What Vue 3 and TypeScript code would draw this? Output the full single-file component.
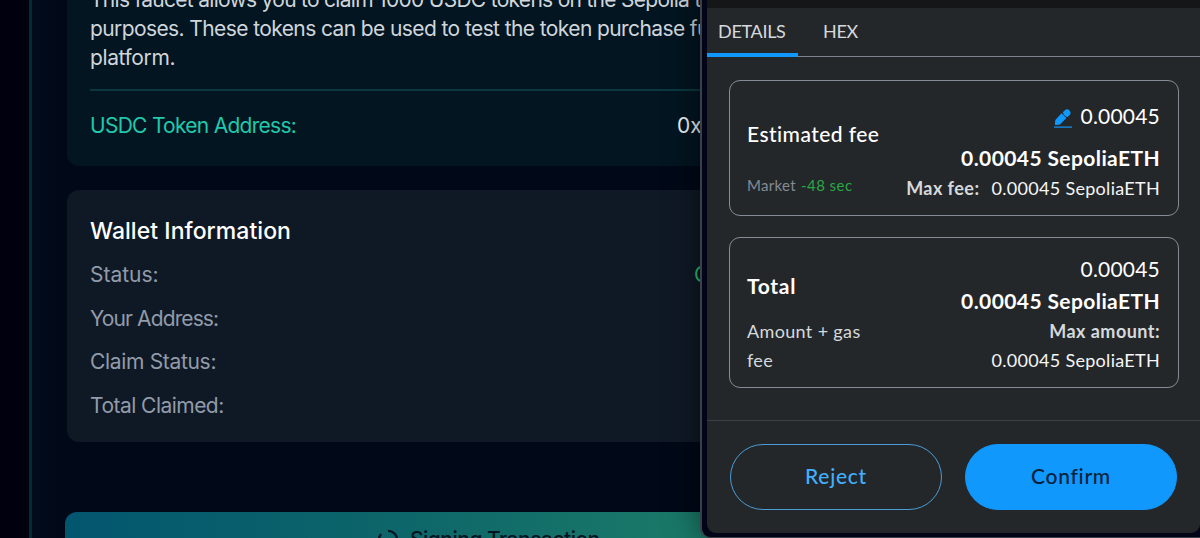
<script setup lang="ts">
interface WalletRow {
  label: string;
  value: string;
  name: string;
}

const description: string[] = [
  'This faucet allows you to claim 1000 USDC tokens on the Sepolia t',
  'purposes. These tokens can be used to test the token purchase fu',
  'platform.',
];

const walletRows: WalletRow[] = [
  { label: 'Status:', value: 'C', name: 'status' },
  { label: 'Your Address:', value: '', name: 'address' },
  { label: 'Claim Status:', value: '', name: 'claim-status' },
  { label: 'Total Claimed:', value: '', name: 'claimed' },
];

const amount = '0.00045';
const amountEth = '0.00045 SepoliaETH';
</script>

<template>
  <div class="page">
    <main class="faucet">
      <section class="card info">
        <p v-for="(line, i) in description" :key="i" class="line" :class="`line-${i}`">{{ line }}</p>
        <div class="token">
          <span class="token-label">USDC Token Address:</span>
          <span class="token-value">0x</span>
        </div>
      </section>

      <section class="card wallet">
        <h2 class="wallet-title">Wallet Information</h2>
        <div v-for="row in walletRows" :key="row.label" class="row">
          <span :class="row.name">{{ row.label }}</span>
          <span class="row-value">{{ row.value }}</span>
        </div>
      </section>

      <button class="claim">
        <svg class="spinner" viewBox="0 0 24 24" width="22" height="22">
          <path d="M12 2a10 10 0 0 1 10 10c0 2.500-1 5-2.800 7M5 19A10 10 0 0 1 4.500 5.400" />
        </svg>
        <span>Signing Transaction</span>
      </button>
    </main>

    <aside class="popup">
      <div class="panel">
        <div class="strip"></div>
        <nav class="tabs">
          <div class="tab active">DETAILS</div>
          <div class="tab">HEX</div>
        </nav>

        <div class="body">
          <section class="box fee">
            <div class="col">
              <span class="fee-title">Estimated fee</span>
              <span class="market">Market <em>-48 sec</em></span>
            </div>
            <div class="col right">
              <span class="amount">
                <svg class="pencil" viewBox="0 0 18 19" width="18" height="19">
                  <path d="M7.600 4.200 12.400 9 6.500 14.900Q5.800 15.600 4.800 15.700L1.600 15.900Q.9 15.900.9 15.200L1.200 12.100Q1.300 11.100 2 10.300Z" />
                  <path d="M8.800 3.200 10.700 1.400Q13.200-.7 15.500 1.400 17.700 3.800 15.500 6.200L13.600 8.100Q10 7 8.800 3.200Z" />
                  <path d="M0 17.500H18V18.700H0Z" />
                </svg>
                <span>{{ amount }}</span>
              </span>
              <b class="amount-eth">{{ amountEth }}</b>
              <span class="max"><b>Max fee:</b><span class="max-eth">{{ amountEth }}</span></span>
            </div>
          </section>

          <section class="box total">
            <div class="col">
              <b class="total-title">Total</b>
              <span class="gas">Amount + gas<br />fee</span>
            </div>
            <div class="col right">
              <span class="amount"><span>{{ amount }}</span></span>
              <b class="amount-eth">{{ amountEth }}</b>
              <span class="max"><b>Max amount:</b></span>
              <span class="max"><span class="max-eth">{{ amountEth }}</span></span>
            </div>
          </section>
        </div>

        <footer class="actions">
          <button class="btn reject">Reject</button>
          <button class="btn confirm">Confirm</button>
        </footer>
      </div>
    </aside>
  </div>
</template>

<style>
body {
  margin: 0;
  overflow: hidden;
  background: #01000f;
}
</style>

<style scoped>
.page {
  position: relative;
  box-sizing: border-box;
  width: 1200px;
  height: 538px;
  padding-left: 29px;
  overflow: hidden;
  background: #01000f;
  font-family: Inter, 'Liberation Sans', sans-serif;
}

.faucet {
  box-sizing: border-box;
  height: 538px;
  padding: 0 291px 0 35px;
  border-left: 3px solid #012d35;
  background: linear-gradient(90deg, #010b1b, #010817 40px);
  overflow: hidden;
}

.card {
  box-sizing: border-box;
  padding: 0 23px;
  border-radius: 12px;
  font-size: 21px;
  line-height: 29px;
  white-space: nowrap;
}

.info {
  height: 166px;
  border-radius: 0 0 12px 12px;
  background: #031521;
  color: #cfd5db;
  overflow: hidden;
}

.line {
  margin: 0;
  letter-spacing: -0.6px;
}

.line-0 {
  margin-top: -15px;
  letter-spacing: -0.71px;
}

.line-2 {
  letter-spacing: -0.38px;
}

.token {
  display: flex;
  justify-content: space-between;
  margin-top: 17px;
  padding-top: 20px;
  border-top: 2px solid #0b383f;
}

.token-label {
  color: #20c9ac;
  letter-spacing: -0.72px;
}

.token-value {
  width: 209px;
  color: #f1f4f6;
}

.wallet {
  height: 252px;
  margin-top: 24px;
  padding-top: 27px;
  background: #0f1926;
  color: #929ba9;
}

.wallet-title {
  margin: 0 0 14px;
  color: #fff;
  font-size: 23px;
  font-weight: 500;
  line-height: 29px;
  letter-spacing: 0.05px;
}

.row {
  display: flex;
  justify-content: space-between;
  height: 43.6px;
}

.address {
  letter-spacing: -0.88px;
}

.claim-status {
  letter-spacing: -0.32px;
}

.claimed {
  letter-spacing: -0.53px;
}

.row-value {
  width: 192px;
  color: #27c46c;
}

.claim {
  display: flex;
  gap: 11px;
  box-sizing: border-box;
  width: 846px;
  height: 66px;
  margin: 70px 0 0 -2px;
  padding: 15px 0 0 312px;
  border: 0;
  border-radius: 12px;
  background: linear-gradient(90deg, #03566f, #0d6669 40%, #1a7a68 75%, #1f8467);
  color: #021522;
  font: 500 21px/26px Inter, sans-serif;
  letter-spacing: -0.5px;
  white-space: nowrap;
}

.spinner {
  margin-top: 2px;
  fill: none;
  stroke: #021522;
  stroke-width: 2.5;
}

.popup {
  position: absolute;
  top: -20px;
  left: 700px;
  box-sizing: border-box;
  width: 520px;
  height: 558px;
  padding: 20px 20px 5px 5px;
  border-left: 2px solid #3a4048;
  border-bottom: 1px solid #3a4048;
  border-radius: 10px;
  background: #020517;
  box-shadow: 0 0 34px rgba(0, 0, 0, 0.55);
  font-family: Lato, 'Liberation Sans', sans-serif;
}

.panel {
  display: flex;
  flex-direction: column;
  height: 533px;
  border-radius: 0 0 9px 9px;
  background: #24272a;
  color: #fff;
  overflow: hidden;
  white-space: nowrap;
}

.strip {
  height: 8px;
  background: #141618;
}

.tabs {
  display: flex;
  box-sizing: border-box;
  height: 49px;
  border-bottom: 1px solid #7d848d;
}

.tab {
  box-sizing: border-box;
  width: 91px;
  height: 49px;
  padding-left: 11px;
  color: #d6d9dc;
  font-size: 18px;
  line-height: 46px;
  letter-spacing: -0.3px;
}

.tab + .tab {
  padding-left: 25px;
}

.active {
  border-bottom: 4px solid #1098fc;
}

.body {
  display: flex;
  flex-direction: column;
  gap: 21px;
  box-sizing: border-box;
  height: 364px;
  padding: 23px 21px 0 22px;
  border-bottom: 1px solid #3b4046;
}

.box {
  display: flex;
  justify-content: space-between;
  box-sizing: border-box;
  padding: 0 18px 0 17px;
  border: 1px solid #848c96;
  border-radius: 11px;
}

.fee {
  height: 136px;
}

.total {
  height: 151px;
}

.col {
  display: flex;
  flex-direction: column;
}

.right {
  align-items: flex-end;
}

.fee-title {
  margin-top: 39px;
  font-size: 21px;
  font-weight: 500;
  line-height: 28px;
  letter-spacing: 0.45px;
}

.market {
  margin-top: 27px;
  color: #848b94;
  font-size: 15px;
  line-height: 20px;
  letter-spacing: 0.3px;
}

.market em {
  margin-left: 1px;
  color: #28a745;
  font-style: normal;
  letter-spacing: 0.45px;
}

.amount {
  display: flex;
  gap: 9px;
  margin-top: 21px;
  font-size: 21px;
  line-height: 28px;
  letter-spacing: 0.2px;
}

.pencil {
  margin-top: 7px;
  fill: #1098fc;
}

.amount-eth {
  margin-top: 14px;
  font-size: 21px;
  line-height: 28px;
  letter-spacing: 0.4px;
}

.max {
  display: flex;
  gap: 12px;
  margin-top: 1px;
  color: #d6d9dc;
  font-size: 18px;
  line-height: 30px;
}

.max b {
  letter-spacing: 0.45px;
}

.max-eth {
  color: #f5f6f7;
  letter-spacing: 0.3px;
}

.total .amount {
  margin-top: 17px;
}

.total .amount-eth {
  margin-top: 4px;
}

.total .max {
  margin-top: 2px;
  line-height: 29px;
}

.total .max + .max {
  margin-top: 0;
}

.total-title {
  margin-top: 34px;
  font-size: 21px;
  line-height: 28px;
  letter-spacing: 0.7px;
}

.gas {
  margin-top: 17px;
  color: #d6d9dc;
  font-size: 18px;
  line-height: 29px;
  letter-spacing: 0.35px;
}

.actions {
  display: flex;
  gap: 23px;
  padding: 23px 23px 0;
}

.btn {
  box-sizing: border-box;
  width: 212px;
  height: 66px;
  padding: 0 0 2px;
  border: 1px solid #1098fc;
  border-radius: 33px;
  font: 500 21px/28px Lato, sans-serif;
  letter-spacing: 0.7px;
}

.reject {
  border-color: #4a9bd6;
  background: transparent;
  color: #43aefc;
}

.confirm {
  background: #1098fc;
  color: #08203a;
}
</style>
